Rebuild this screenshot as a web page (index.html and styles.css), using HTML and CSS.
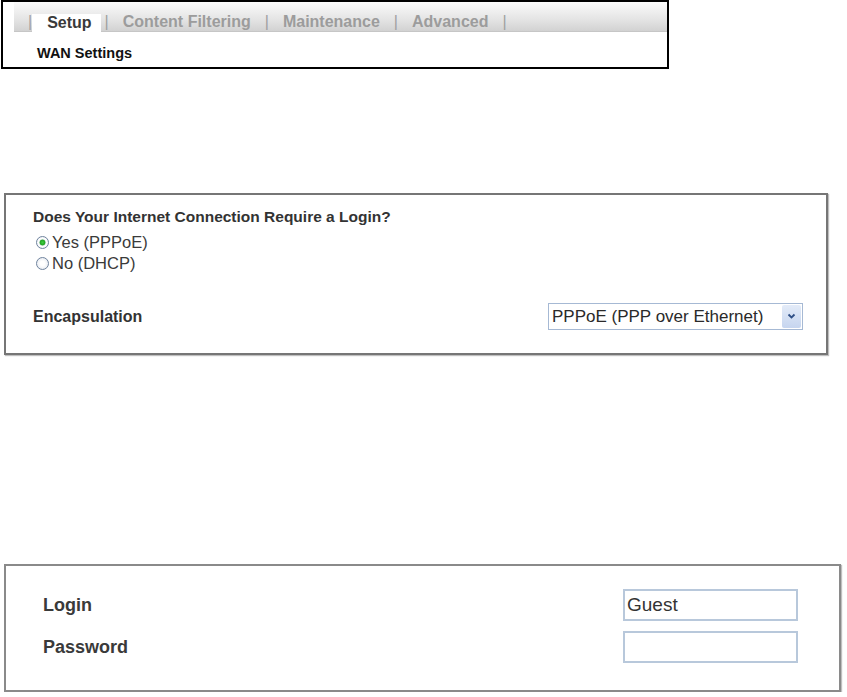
FILE: index.html
```html
<!DOCTYPE html>
<html lang="en">
<head>
  <meta charset="UTF-8" />
  <title>WAN Settings</title>
  <link rel="stylesheet" href="styles.css">
</head>
<body>

  <!-- Navegacao -->
  <div class="nav-box">
    <div class="tabbar">
      <span class="sep">|</span>
      <span class="tab active">Setup</span>
      <span class="sep">|</span>
      <span class="tab">Content Filtering</span>
      <span class="sep">|</span>
      <span class="tab">Maintenance</span>
      <span class="sep">|</span>
      <span class="tab">Advanced</span>
      <span class="sep">|</span>
    </div>
    <div class="subtitle">WAN Settings</div>
  </div>

  <!-- Tipo de ligacao -->
  <div class="panel panel-conn">
    <div class="question">Does Your Internet Connection Require a Login?</div>
    <div class="radio-row">
      <span class="radio checked"></span>
      <span class="radio-label">Yes (PPPoE)</span>
    </div>
    <div class="radio-row">
      <span class="radio"></span>
      <span class="radio-label">No (DHCP)</span>
    </div>
    <div class="field-row encap-row">
      <span class="field-label">Encapsulation</span>
      <div class="select">
        <span class="select-value">PPPoE (PPP over Ethernet)</span>
        <span class="select-btn">
          <svg width="9" height="7" viewBox="0 0 9 7">
            <path d="M1.5 1.5 L4.5 4.5 L7.5 1.5" fill="none" stroke="#2f4f86" stroke-width="1.8"/>
          </svg>
        </span>
      </div>
    </div>
  </div>

  <!-- Credenciais -->
  <div class="panel panel-login">
    <div class="field-row login-row">
      <span class="login-label">Login</span>
      <input class="text-input" type="text" value="Guest" />
    </div>
    <div class="field-row login-row">
      <span class="login-label">Password</span>
      <input class="text-input" type="password" value="" />
    </div>
  </div>

</body>
</html>
```

FILE: styles.css
```css
body {
  margin: 0;
  background: #fff;
  font-family: "Liberation Sans", Arial, sans-serif;
  color: #333;
}

.nav-box {
  margin-left: 1px;
  width: 664px;
  height: 65px;
  border: 2px solid #000;
}

.tabbar {
  display: flex;
  align-items: flex-end;
  margin-left: 11px;
  padding-left: 14px;
  height: 29px;
  background: linear-gradient(#fbfbfb, #e4e4e4 60%, #d2d2d2);
  border-bottom: 1px solid #c6c6c6;
  font-size: 16px;
  line-height: 18px;
}

.sep {
  color: #a0a0a0;
}

.tab {
  font-weight: bold;
  color: #9c9c9c;
  padding: 0 14px;
}

.tab.active {
  color: #3a3a3a;
  background: #fff;
  padding: 0 9px 0 15px;
  margin-right: 4px;
  margin-bottom: -1px;
  height: 18px;
}

.subtitle {
  margin-top: 13px;
  padding-left: 34px;
  font-size: 14.5px;
  line-height: 16px;
  font-weight: bold;
  color: #111;
}

.panel {
  margin-left: 4px;
  border: 2px solid #767676;
  box-shadow: 1px 1px 1px rgba(0,0,0,0.25);
  box-sizing: border-box;
}

.panel-conn {
  margin-top: 124px;
  width: 824px;
  height: 162px;
  padding: 13px 23px 0 27px;
}

.question {
  font-size: 15.5px;
  line-height: 18px;
  font-weight: bold;
  color: #333;
  margin-bottom: 6px;
}

.radio-row {
  display: flex;
  align-items: center;
  height: 21px;
  padding-left: 3px;
  gap: 3px;
}

.radio {
  width: 11px;
  height: 11px;
  border-radius: 50%;
  border: 1px solid #6f839e;
  background: radial-gradient(circle, #ffffff 30%, #dde2ea);
}

.radio.checked {
  background: radial-gradient(circle, #3fcf3f 0, #22a322 2.6px, #e9edf2 3.3px, #ffffff 4.2px, #dde2ea);
}

.radio-label {
  font-size: 16.5px;
  color: #3a3a3a;
}

.field-row {
  display: flex;
  justify-content: space-between;
  align-items: center;
}

.encap-row {
  margin-top: 29px;
  height: 27px;
}

.field-label {
  font-size: 16px;
  font-weight: bold;
  color: #333;
}

.select {
  display: flex;
  align-items: center;
  justify-content: space-between;
  width: 255px;
  height: 27px;
  box-sizing: border-box;
  border: 1px solid #a6b9d4;
  padding: 0 1px 0 3px;
}

.select-value {
  font-size: 17px;
  color: #2a2a2a;
}

.select-btn {
  display: flex;
  align-items: center;
  justify-content: center;
  width: 19px;
  height: 23px;
  background: linear-gradient(#e3ebf8, #c6d5ef);
  border-radius: 2px;
}

.panel-login {
  margin-top: 209px;
  width: 837px;
  height: 128px;
  padding: 23px 41px 0 37px;
  border-color: #8a8a8a;
}

.login-row {
  height: 32px;
  margin-bottom: 10px;
}

.login-label {
  font-size: 18px;
  font-weight: bold;
  color: #3a3a3a;
}

.text-input {
  width: 175px;
  height: 32px;
  box-sizing: border-box;
  border: 2px solid #b8c8db;
  padding: 0 2px;
  margin: 0;
  font-family: "Liberation Sans", Arial, sans-serif;
  font-size: 19px;
  color: #333;
  outline: none;
}
```
